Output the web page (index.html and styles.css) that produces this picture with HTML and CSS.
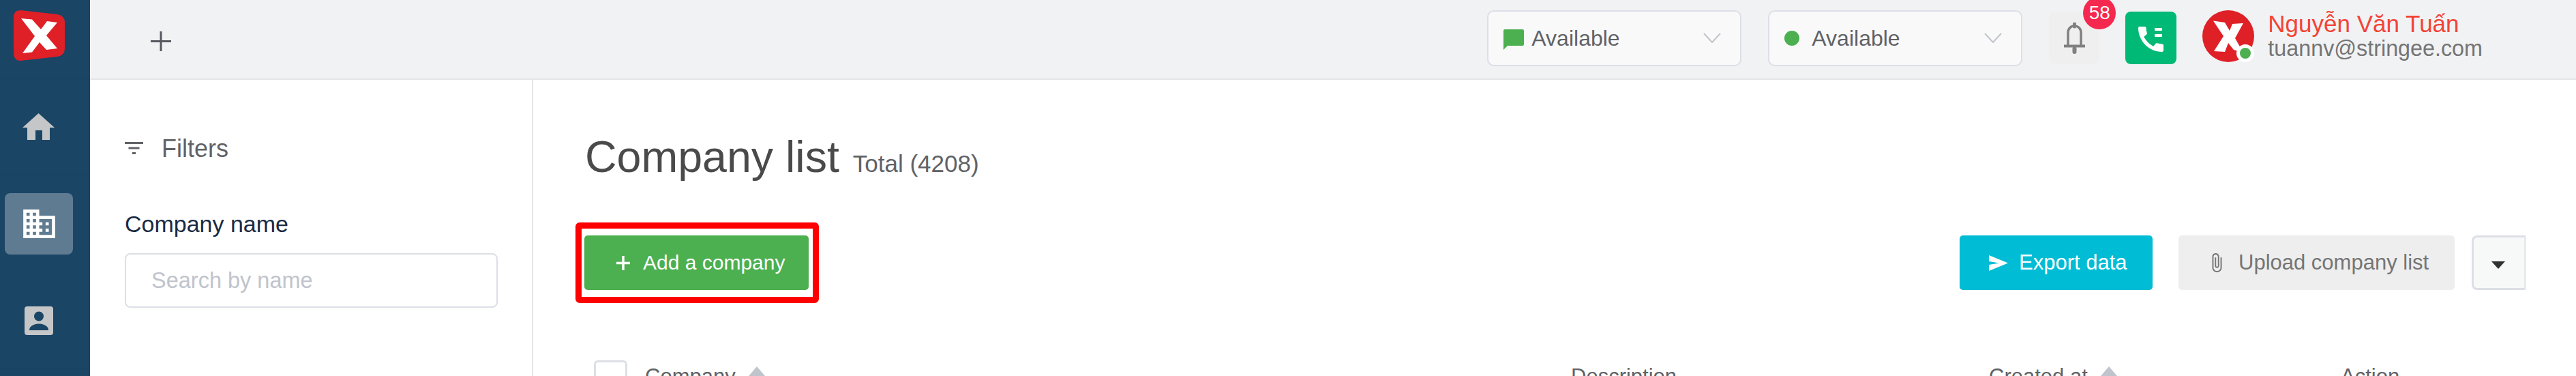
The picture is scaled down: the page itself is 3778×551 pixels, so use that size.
FILE: index.html
```html
<!DOCTYPE html>
<html lang="en">
<head>
<meta charset="utf-8">
<title>Company list</title>
<link rel="stylesheet" href="styles.css">
</head>
<body>
<div class="app">
  <nav class="sidebar">
    <div class="logo-cell">
      <svg class="logo" viewBox="0 0 75 74"><path fill="#df2027" d="M10 0 L64 6 Q75 8 75 18 V56 Q75 66 64 68 L10 74 Q0 74 0 62 V10 Q0 0 10 0Z"/><path fill="#fff" d="M11 12 L27 13.5 L40 28 L49 16 L64 18 L48 37 L64 56 L48 58 L38 47 L27 61.5 L13 63 L31 38Z"/></svg>
    </div>
    <a class="nav-item">
      <svg class="nav-home" viewBox="0 0 47 39"><path fill="#c4c6c8" d="M23.5 0 L47 21 H40 V39 H29 V25 H19 V39 H7 V21 H0Z"/></svg>
    </a>
    <a class="nav-item">
      <span class="nav-active">
        <svg class="nav-building" viewBox="2 3 20 18"><path fill="#fff" d="M12 7V3H2v18h20V7H12zM6 19H4v-2h2v2zm0-4H4v-2h2v2zm0-4H4V9h2v2zm0-4H4V5h2v2zm4 12H8v-2h2v2zm0-4H8v-2h2v2zm0-4H8V9h2v2zm0-4H8V5h2v2zm10 12h-8v-2h2v-2h-2v-2h2v-2h-2V9h8v10zm-2-8h-2v2h2v-2zm0 4h-2v2h2v-2z"/></svg>
      </span>
    </a>
    <a class="nav-item">
      <svg class="nav-contact" viewBox="0 0 42 42"><rect width="42" height="42" rx="4" fill="#c4c6c8"/><circle cx="21" cy="14.5" r="7" fill="#1a4565"/><path fill="#1a4565" d="M7 35 C7 28 15 25.500 21 25.500 S35 28 35 35Z"/></svg>
    </a>
  </nav>
  <div class="main">
    <header class="topbar">
      <svg class="add-tab" viewBox="0 0 30 29"><path d="M15 0V29M0 14.500H30" stroke="#55585e" stroke-width="3" fill="none"/></svg>
      <div class="top-right">
        <div class="select">
          <svg class="chat-icon" viewBox="0 0 30 30"><path fill="#4caf50" d="M2 0H28a2 2 0 0 1 2 2V22a2 2 0 0 1-2 2H6L0 30V2a2 2 0 0 1 2-2Z"/></svg>
          <span class="select-text">Available</span>
          <svg class="chevron" viewBox="0 0 26 15"><path d="M1 1L13 14L25 1" stroke="#c0c4cc" stroke-width="2" fill="none"/></svg>
        </div>
        <div class="select">
          <span class="status-dot"></span>
          <span class="select-text">Available</span>
          <svg class="chevron" viewBox="0 0 26 15"><path d="M1 1L13 14L25 1" stroke="#c0c4cc" stroke-width="2" fill="none"/></svg>
        </div>
        <div class="bell-box">
          <svg class="bell" viewBox="0 0 33 46"><path d="M16.500 2V6" stroke="#808080" stroke-width="5" stroke-linecap="round"/><path d="M7 34V15C7 9 11 5 16.500 5S26 9 26 15V34" stroke="#808080" stroke-width="3.500" fill="none"/><path d="M1 34.500H32" stroke="#808080" stroke-width="4"/><path d="M16.500 38V43" stroke="#808080" stroke-width="6" stroke-linecap="round"/></svg>
          <span class="badge">58</span>
        </div>
        <div class="phone-btn">
          <svg class="phone" viewBox="3 3 18 18"><path fill="#fff" d="M20.010 15.380c-1.230 0-2.420-.2-3.530-.56-.35-.12-.74-.03-1.010.24l-1.570 1.970c-2.830-1.350-5.480-3.900-6.890-6.830l1.950-1.660c.27-.28.35-.67.24-1.020-.37-1.110-.56-2.300-.56-3.530 0-.54-.45-.99-.99-.99H4.190C3.650 3 3 3.240 3 3.990 3 13.280 10.730 21 20.010 21c.71 0 .99-.63.99-1.180v-3.450c0-.54-.45-.99-.99-.99z"/></svg>
          <span class="phone-dots"><i></i><i></i></span>
        </div>
        <div class="avatar">
          <svg class="avatar-x" viewBox="0 0 76 76"><circle cx="38" cy="38" r="38" fill="#df2027"/><path fill="#fff" d="M16 15.500L33 18L40 30L44 20L60 19L48 41L60 62L46 58L38 48L33 61L17 60L31 38Z"/></svg>
          <span class="avatar-status"></span>
        </div>
        <div class="user">
          <div class="user-name">Nguyễn Văn Tuấn</div>
          <div class="user-mail">tuannv@stringee.com</div>
        </div>
      </div>
    </header>
    <div class="content">
      <aside class="filters">
        <div class="filters-head">
          <svg class="filter-icon" viewBox="0 0 27 18"><path fill="#606266" d="M0 0H27V3H0ZM5.500 7.500H21.500V10.500H5.500ZM11 15H16V18H11Z"/></svg>
          <span>Filters</span>
        </div>
        <label class="field-label">Company name</label>
        <input class="field-input" type="text" placeholder="Search by name">
      </aside>
      <section class="list">
        <div class="title-row">
          <h1 class="title">Company list</h1>
          <span class="total">Total (4208)</span>
        </div>
        <div class="toolbar">
          <button class="btn btn-add">
            <svg class="plus-icon" viewBox="0 0 20 21"><path d="M10 0V21M0 10.500H20" stroke="#fff" stroke-width="3.500"/></svg>
            Add a company
          </button>
          <div class="toolbar-right">
            <button class="btn btn-export">
              <svg class="send-icon" viewBox="0 0 28 23"><path fill="#fff" d="M0 0L28 11.500L0 23V14L15 11.500L0 9Z"/></svg>
              Export data
            </button>
            <button class="btn btn-upload">
              <svg class="clip-icon" viewBox="7 1 11 22"><path fill="#757575" d="M16.500 6v11.500c0 2.210-1.790 4-4 4s-4-1.790-4-4V5c0-1.380 1.120-2.500 2.500-2.500s2.500 1.120 2.500 2.500v10.500c0 .55-.45 1-1 1s-1-.45-1-1V6H10v9.500c0 1.380 1.120 2.500 2.500 2.500s2.500-1.120 2.500-2.500V5c0-2.210-1.790-4-4-4S7 2.790 7 5v12.500c0 3.040 2.460 5.500 5.500 5.500s5.500-2.460 5.500-5.500V6h-1.500z"/></svg>
              Upload company list
            </button>
            <button class="btn-more"><span class="caret"></span></button>
          </div>
        </div>
        <div class="table-head">
          <div class="col col-company"><span class="checkbox"></span><span>Company</span><span class="sort"></span></div>
          <div class="col col-desc"><span>Description</span></div>
          <div class="col col-created"><span>Created at</span><span class="sort"></span></div>
          <div class="col col-action"><span>Action</span></div>
        </div>
      </section>
    </div>
  </div>
</div>
</body>
</html>
```
FILE: styles.css
```css
* { box-sizing: border-box; }
html, body { margin: 0; height: 551px; overflow: hidden; background: #fff; }
body { font-family: "Liberation Sans", Arial, sans-serif; color: #606266; }
svg { display: block; flex: none; }

.app { display: flex; height: 551px; }

/* Sidebar */
.sidebar { width: 132px; flex: none; background: #1a4565; display: flex; flex-direction: column; }
.logo-cell { height: 115px; padding: 15px 0 0 20px; border-bottom: 1px solid #1a4261; }
.logo { width: 75px; height: 74px; }
.nav-item { height: 142px; flex: none; display: flex; align-items: center; padding-left: 7px; border-bottom: 1px solid #1a4261; }
.nav-home { width: 47px; height: 39px; margin-left: 26px; }
.nav-active { width: 100px; height: 90px; background: #5f7b92; border-radius: 8px; display: flex; align-items: center; justify-content: center; }
.nav-building { width: 47px; height: 42px; }
.nav-contact { width: 42px; height: 42px; margin-left: 29px; }

/* Top bar */
.main { flex: 1; min-width: 0; display: flex; flex-direction: column; }
.topbar { height: 117px; flex: none; background: #f1f2f4; border-bottom: 2px solid #e4e5e7; display: flex; align-items: flex-start; padding: 15px 137px 0 89px; }
.add-tab { width: 30px; height: 29px; margin-top: 31px; }
.top-right { margin-left: auto; display: flex; align-items: flex-start; }

.select { width: 373px; height: 82px; background: #f9f9fa; border: 2.5px solid #dcdfe6; border-radius: 10px; display: flex; align-items: center; padding: 0 28px 0 22px; margin-right: 39px; }
.chat-icon { width: 30px; height: 30px; margin-right: 11px; margin-top: 4px; }
.status-dot { width: 22px; height: 22px; border-radius: 50%; background: #4caf50; margin-right: 18px; }
.select-text { font-size: 32px; color: #606266; flex: 1; }
.chevron { width: 26px; height: 15px; margin-top: -2px; }

.bell-box { position: relative; width: 74px; height: 77px; margin-top: 2px; margin-right: 38px; background: #efefef; border-radius: 8px; display: flex; align-items: center; justify-content: center; }
.bell { width: 33px; height: 46px; }
.badge { position: absolute; top: -22px; right: -24px; width: 48px; height: 48px; border-radius: 50%; background: #f5294f; color: #fff; font-size: 28px; display: flex; align-items: center; justify-content: center; }

.phone-btn { position: relative; width: 75px; height: 77px; margin-top: 2px; margin-right: 38px; background: #00b976; border-radius: 8px; }
.phone { position: absolute; left: 19px; top: 22px; width: 37px; height: 37px; }
.phone-dots { position: absolute; left: 43px; top: 24px; display: flex; flex-direction: column; gap: 5px; }
.phone-dots i { display: block; width: 11px; height: 4px; background: #fff; border-radius: 1px; }

.avatar { position: relative; width: 76px; height: 76px; margin-right: 20px; }
.avatar-x { width: 76px; height: 76px; }
.avatar-status { position: absolute; right: 0; bottom: 0; width: 26px; height: 26px; border-radius: 50%; background: #4caf50; border: 5px solid #fff; }

.user { padding-top: 1px; }
.user-name { font-size: 35px; line-height: 37px; color: #f44336; white-space: nowrap; }
.user-mail { font-size: 32.300px; line-height: 37px; color: #757575; white-space: nowrap; }

/* Content */
.content { flex: 1; display: flex; min-height: 0; }

.filters { width: 650px; flex: none; border-right: 2px solid #e4e5e7; padding: 81px 50px 0 51px; }
.filters-head { display: flex; align-items: center; height: 40px; font-size: 36px; color: #606266; }
.filter-icon { width: 27px; height: 18px; margin-right: 27px; margin-top: -2px; }
.field-label { display: block; margin-top: 70px; font-size: 34px; line-height: 40px; color: #1a2b45; }
.field-input { display: block; width: 547px; height: 80px; margin-top: 23px; padding: 0 37px; border: 2.5px solid #dcdfe6; border-radius: 8px; background: #fff; font-family: inherit; font-size: 32.500px; outline: none; }
.field-input::placeholder { color: #c0c4cc; opacity: 1; }

.list { flex: 1; min-width: 0; padding: 76px 73px 0 76px; }
.title-row { display: flex; align-items: baseline; height: 75px; }
.title { margin: 0; font-size: 64.500px; line-height: 75px; font-weight: 400; color: #4a4a4a; }
.total { margin-left: 20px; font-size: 35px; color: #606266; }

.toolbar { display: flex; justify-content: space-between; margin-top: 77px; height: 80px; margin-left: -2px; }
.toolbar-right { display: flex; }
.btn { height: 80px; border: 0; border-radius: 5px; display: flex; align-items: center; font-family: inherit; white-space: nowrap; padding: 0; }
.btn-add { position: relative; width: 329px; margin-left: 1px; padding-left: 47px; font-size: 30px; color: #fff; background: #4caf50; }
.btn-add::after { content: ""; position: absolute; inset: -19px -15px -19px -13px; border: 9px solid #f00; border-radius: 6px; }
.plus-icon { width: 20px; height: 21px; margin-right: 19px; }
.btn-export { width: 283px; margin-right: 38px; padding-left: 43px; font-size: 31px; color: #fff; background: #00bcd4; }
.send-icon { width: 28px; height: 23px; margin-right: 16px; }
.btn-upload { width: 405px; margin-right: 25px; padding-left: 48px; font-size: 31px; color: #757575; background: #eee; }
.clip-icon { width: 17px; height: 28px; margin-right: 23px; }
.btn-more { width: 80px; height: 80px; padding: 0; background: #f7f8f8; border: 3px solid #dcdfe6; border-right-color: #e8eaee; border-radius: 8px 2px 2px 8px; display: flex; align-items: center; justify-content: center; }
.caret { width: 0; height: 0; border-left: 10px solid transparent; border-right: 10px solid transparent; border-top: 11px solid #303133; margin-top: 6px; margin-right: 2px; }

.table-head { display: flex; margin-top: 103px; margin-left: -2px; padding-left: 15px; font-size: 31px; line-height: 40px; color: #606266; }
.col { display: flex; align-items: flex-start; padding-top: 4px; flex: none; }
.col-company { width: 1433px; padding-top: 0; }
.col-company > span:nth-child(2) { margin-top: 4px; }
.col-desc { width: 613px; }
.col-created { width: 516px; padding-top: 0; }
.col-created > span:first-child { margin-top: 4px; }
.checkbox { width: 49px; height: 49px; border: 3px solid #dcdfe6; border-radius: 6px; margin-right: 26px; background: #fff; }
.sort { width: 0; height: 0; margin: 9px 0 0 19px; border-left: 12.500px solid transparent; border-right: 12.500px solid transparent; border-bottom: 14px solid #c0c4cc; }
```
